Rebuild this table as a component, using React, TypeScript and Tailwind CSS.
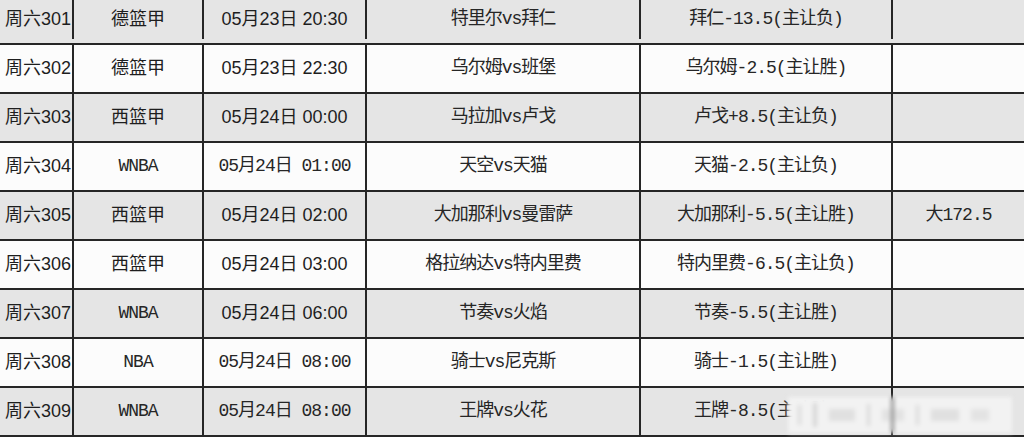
import React from "react";

type Row = {
  id: string;
  league: string;
  leagueSong?: boolean;
  date: string;
  dateSong?: boolean;
  match: string;
  hcap: string;
  total?: string;
};

const rows: Row[] = [
  { id: "周六301", league: "德篮甲", date: "05月23日 20:30", match: "特里尔vs拜仁", hcap: "拜仁-13.5(主让负)" },
  { id: "周六302", league: "德篮甲", date: "05月23日 22:30", match: "乌尔姆vs班堡", hcap: "乌尔姆-2.5(主让胜)" },
  { id: "周六303", league: "西篮甲", date: "05月24日 00:00", match: "马拉加vs卢戈", hcap: "卢戈+8.5(主让负)" },
  { id: "周六304", league: "WNBA", leagueSong: true, date: "05月24日 01:00", dateSong: true, match: "天空vs天猫", hcap: "天猫-2.5(主让负)" },
  { id: "周六305", league: "西篮甲", date: "05月24日 02:00", match: "大加那利vs曼雷萨", hcap: "大加那利-5.5(主让胜)", total: "大172.5" },
  { id: "周六306", league: "西篮甲", date: "05月24日 03:00", match: "格拉纳达vs特内里费", hcap: "特内里费-6.5(主让负)" },
  { id: "周六307", league: "WNBA", leagueSong: true, date: "05月24日 06:00", match: "节奏vs火焰", hcap: "节奏-5.5(主让胜)" },
  { id: "周六308", league: "NBA", leagueSong: true, date: "05月24日 08:00", dateSong: true, match: "骑士vs尼克斯", hcap: "骑士-1.5(主让胜)" },
  { id: "周六309", league: "WNBA", leagueSong: true, date: "05月24日 08:00", dateSong: true, match: "王牌vs火花", hcap: "王牌-8.5(主让胜)" },
];

const sans = "font-['Liberation_Sans','Noto_Sans_CJK_SC',sans-serif] text-[18px] text-[#1e1e1e]";
const song = "font-['Liberation_Mono','Noto_Sans_CJK_SC',monospace] text-[18px] tracking-[-1px] text-[#262626]";

export default function App() {
  return (
    <div className="relative w-[1024px] h-[442px] overflow-hidden bg-white">
      <div className="flex flex-col">
        {rows.map((r, i) => {
          const bg = i % 2 === 0 ? "bg-[#e5e5e5]" : "bg-[#fcfcfc]";
          const h = i === 0 ? "h-[45px] pb-[4px]" : "h-[49px]";
          return (
            <div
              key={r.id}
              className={`grid grid-cols-[74px_130px_163px_274px_252px_1fr] border-b-2 border-[#262626] ${bg} ${h}`}
            >
              <div className={`flex items-center pl-[5px] border-r-2 border-[#262626] ${sans}`}>{r.id}</div>
              <div className={`flex items-center justify-center border-r-2 border-[#262626] ${r.leagueSong ? song : sans}`}>
                {r.league}
              </div>
              <div className={`flex items-center justify-center border-r-2 border-[#262626] whitespace-pre ${r.dateSong ? song : sans}`}>
                {r.date}
              </div>
              <div className={`flex items-center justify-center border-r-2 border-[#262626] ${song}`}>{r.match}</div>
              <div className={`flex items-center justify-center border-r-2 border-[#262626] ${song}`}>{r.hcap}</div>
              <div className={`flex items-center justify-center ${song}`}>{r.total ?? ""}</div>
            </div>
          );
        })}
      </div>
      {/* blurred watermark lying over the last row */}
      <div className="absolute left-[788px] top-[397px] w-[224px] h-[36px] bg-[#f2f2f2] blur-[2px]">
        <div className="absolute left-[103px] top-0 w-[3px] h-[36px] bg-[#8e8e8e]" />
        <div className="flex h-full items-center gap-[12px] px-[10px]">
          <div className="w-[3px] h-[20px] bg-[#dadada]" />
          <div className="w-[4px] h-[24px] bg-[#d6d6d6]" />
          <div className="w-[26px] h-[12px] bg-[#e0e0e0]" />
          <div className="w-[3px] h-[22px] bg-[#d8d8d8]" />
          <div className="w-[22px] h-[12px] bg-[#e2e2e2]" />
          <div className="w-[3px] h-[20px] bg-[#dadada]" />
          <div className="w-[28px] h-[12px] bg-[#e0e0e0]" />
          <div className="w-[18px] h-[12px] bg-[#e3e3e3]" />
        </div>
      </div>
    </div>
  );
}
